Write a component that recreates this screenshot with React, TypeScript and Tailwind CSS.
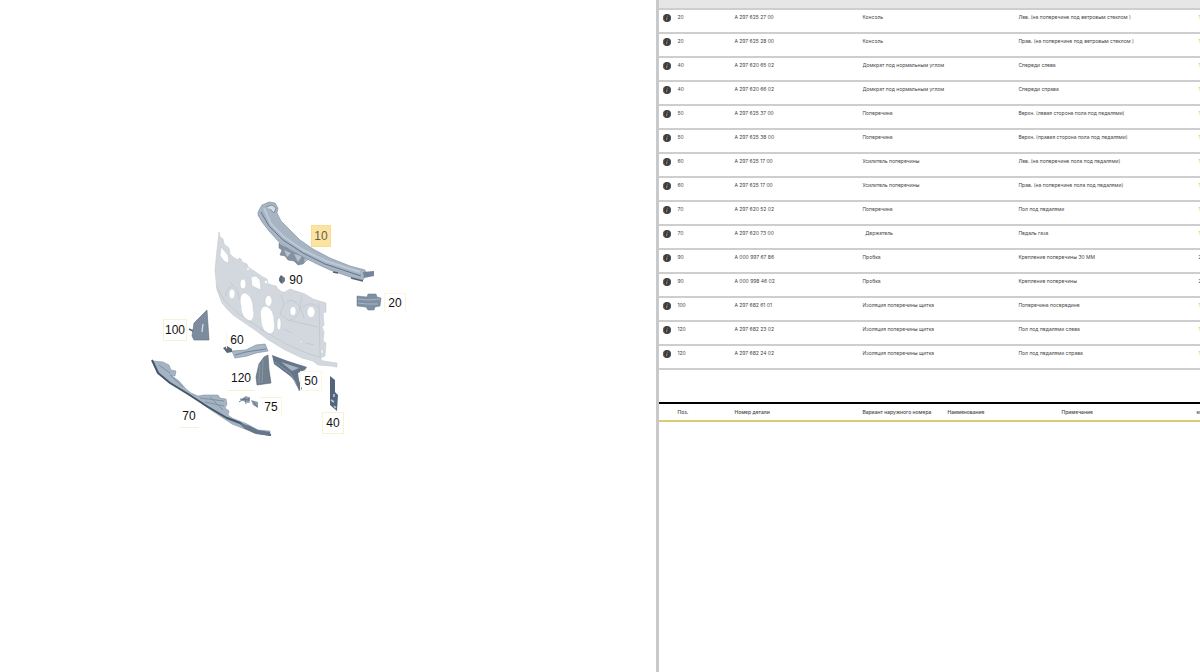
interface Part {
  pos: string;
  number: string;
  name: string;
  note: string;
  qty: number;
}

const parts: Part[] = [
  { pos: "20", number: "A 297 625 27 00", name: "Консоль", note: "Лев. (на поперечине под ветровым стеклом )", qty: 1 },
  { pos: "20", number: "A 297 625 28 00", name: "Консоль", note: "Прав. (на поперечине под ветровым стеклом )", qty: 1 },
  { pos: "40", number: "A 297 620 65 02", name: "Домкрат под нормальным углом", note: "Спереди слева", qty: 1 },
  { pos: "40", number: "A 297 620 66 02", name: "Домкрат под нормальным углом", note: "Спереди справа", qty: 1 },
  { pos: "50", number: "A 297 625 37 00", name: "Поперечина", note: "Верхн. (левая сторона пола под педалями)", qty: 1 },
  { pos: "50", number: "A 297 625 38 00", name: "Поперечина", note: "Верхн. (правая сторона пола под педалями)", qty: 1 },
  { pos: "60", number: "A 297 625 17 00", name: "Усилитель поперечины", note: "Лев. (на поперечине пола под педалями)", qty: 1 },
  { pos: "60", number: "A 297 625 17 00", name: "Усилитель поперечины", note: "Прав. (на поперечине пола под педалями)", qty: 1 },
  { pos: "70", number: "A 297 620 52 02", name: "Поперечина", note: "Пол под педалями", qty: 1 },
  { pos: "70", number: "A 297 620 73 00", name: "  Держатель", note: "Педаль газа", qty: 1 },
  { pos: "90", number: "A 000 997 67 86", name: "Пробка", note: "Крепление поперечины 30 MM", qty: 2 },
  { pos: "90", number: "A 000 998 46 02", name: "Пробка", note: "Крепление поперечины", qty: 2 },
  { pos: "100", number: "A 297 682 61 01", name: "Изоляция поперечины щитка", note: "Поперечина посередине", qty: 1 },
  { pos: "120", number: "A 297 682 23 02", name: "Изоляция поперечины щитка", note: "Пол под педалями слева", qty: 1 },
  { pos: "120", number: "A 297 682 24 02", name: "Изоляция поперечины щитка", note: "Пол под педалями справа", qty: 1 },
];

// callouts on the drawing canvas
const callouts = [
  { id: "10", box: "left-[166px] top-[30px] w-5 h-[22px] bg-[#fce3a0] border-[#f7dc94] text-[#66604f]" },
  { id: "90", box: "left-[141px] top-[76px] w-5 h-[18px] border-transparent text-[#111]" },
  { id: "20", box: "left-[239px] top-[98px] w-[22px] h-[20px] border-[#faf6e2] border-b-transparent text-[#111]" },
  { id: "100", box: "left-[18px] top-[124px] w-6 h-[22px] border-[#f8f2d4] text-[#111]" },
  { id: "60", box: "left-[81px] top-[136px] w-[22px] h-[18px] border-transparent border-l-[#faf6e2] text-[#111]" },
  { id: "120", box: "left-[82px] top-[170px] w-[28px] h-[26px] border-transparent border-b-[#f8f2d4] text-[#111]" },
  { id: "50", box: "left-[155px] top-[176px] w-[22px] h-[20px] border-[#faf6e2] text-[#111]" },
  { id: "40", box: "left-[177px] top-[217px] w-[22px] h-[22px] border-[#f8f2d4] text-[#111]" },
  { id: "75", box: "left-[115px] top-[202px] w-[22px] h-[20px] border-transparent border-t-[#f8f2d4] border-r-[#faf6e2] text-[#111]" },
  { id: "70", box: "left-[34px] top-[209px] w-[20px] h-[24px] border-transparent border-b-[#f8f2d4] text-[#111]" },
];

export default function App() {
  return (
    <div className="flex min-h-screen overflow-hidden bg-white font-['Liberation_Sans',Arial,sans-serif] text-[#444]">
      <main className="min-w-0 flex-1 pl-[145px] pt-[195px]">
        <div className="relative h-[250px] w-[270px]">
          <Drawing />
          {callouts.map((c) => (
            <button
              key={c.id}
              type="button"
              className={`absolute flex items-center justify-center border text-[12px] leading-4 ${c.box}`}
            >
              {c.id}
            </button>
          ))}
        </div>
      </main>

      <aside className="w-[45.3%] overflow-hidden border-l-3 border-[#c9c9c9] font-[Inter,sans-serif] text-[5px] leading-[6px]">
        <div className="h-2 bg-[#e6e6e6]" />
        <table className="w-[580px] table-fixed border-collapse">
          <colgroup>
            <col className="w-[18px]" />
            <col className="w-[57px]" />
            <col className="w-[128px]" />
            <col className="w-[156px]" />
            <col className="w-[180px]" />
            <col />
          </colgroup>
          <tbody>
            {parts.map((part, i) => (
              <tr key={i} className="h-6 border-y-2 border-[#cecece] align-top">
                <td className="pl-1 pt-1">
                  <button type="button" aria-label={`Info ${part.number}`} className="block">
                    <InfoIcon />
                  </button>
                </td>
                <td className="pt-1">{part.pos}</td>
                <td className="pt-1">{part.number}</td>
                <td className="whitespace-pre pt-1">{part.name}</td>
                <td className="pt-1">{part.note}</td>
                <td className={part.qty > 1 ? "pt-1" : "pt-1 text-[#d9c24a]"}>{part.qty}</td>
              </tr>
            ))}
          </tbody>
        </table>

        <table className="mt-8 w-[580px] table-fixed border-collapse">
          <colgroup>
            <col className="w-[75px]" />
            <col className="w-[128px]" />
            <col className="w-[85px]" />
            <col className="w-[114px]" />
            <col className="w-[135px]" />
            <col />
          </colgroup>
          <thead>
            <tr className="h-[18px] whitespace-nowrap border-b-2 border-t-2 border-b-[#dccb72] border-t-black text-left">
              <th className="pl-[18px] font-medium">Поз.</th>
              <th className="font-medium">Номер детали</th>
              <th className="font-medium">Вариант наружного номера</th>
              <th className="font-medium">Наименование</th>
              <th className="font-medium">Примечание</th>
              <th className="font-medium">кол-во</th>
            </tr>
          </thead>
        </table>
      </aside>
    </div>
  );
}

function InfoIcon() {
  return (
    <svg viewBox="0 0 8 8" className="size-2">
      <circle cx="4" cy="4" r="4" fill="#3d3b3a" />
      <path d="M1.6 1.4A3.6 3.6 0 0 0 1.6 6.6" stroke="#8a5a35" strokeWidth="0.9" fill="none" />
      <path d="M6.4 1.4A3.6 3.6 0 0 1 6.4 6.6" stroke="#3f5f7d" strokeWidth="0.9" fill="none" />
      <path d="M4.5 1.7L4.3 2.6M4.1 3.4L3.6 6.2" stroke="#9a938b" strokeWidth="1" fill="none" />
    </svg>
  );
}

function Drawing() {
  return (
    <svg viewBox="145 195 270 250" className="block h-full w-full" strokeLinejoin="round">
      {/* bulkhead */}
      <path
        fill="#d2d8de"
        fillRule="evenodd"
        stroke="#c3cbd2"
        strokeWidth="0.6"
        d="M219 232L220 237L223 239L224 244L229 248L230 254L233 257L238 260L239 258L241 259L242 262L247 264L248 267L263 277L267 279L268 284L276 286L278 289L282 292L285 292L290 289L305 294L313 299L326 303L326 312L323 313L324 325L322 327L324 332L323 341L326 343L325 356L320 358L323 361L337 363L337 367L331 366L318 365L313 361L302 358L285 350L267 339L255 330L233 315L227 309L222 303L217 290L215 270L217 250Z
        M221 247L228 255L229 263L225 262L220 256Z
        M251 277L256 276L260 280L261 290L252 286Z
        M229 294A3 5 0 1 0 235 294A3 5 0 1 0 229 294Z
        M240 284A3 5 0 1 0 246 284A3 5 0 1 0 240 284Z
        M241 306A6 11 -15 1 0 253 308A6 11 -15 1 0 241 306Z
        M265 301A3.5 5.5 0 1 0 272 301A3.5 5.5 0 1 0 265 301Z
        M261 319A6.5 11 -15 1 0 274 321A6.5 11 -15 1 0 261 319Z
        M277 323A2 6 0 1 0 281 325A2 6 0 1 0 277 323Z
        M290 311A3 4.5 0 1 0 296 311A3 4.5 0 1 0 290 311Z
        M307 312A4 5.5 0 1 0 315 312A4 5.5 0 1 0 307 312Z
        M300 341L302 340L302 343L300 343Z
        M321 350L323 349L323 354L321 353Z"
      />
      <g fill="none" stroke="#bbc4cc" strokeWidth="0.7">
        <path d="M216 285L224 300L239 314L261 329L286 344L304 352L321 358" />
        <path d="M281 295L284 304L280 314L288 320L318 327M302 295L300 306L304 318M286 303Q292 296 300 307Q299 318 290 320" />
        <path d="M230 282L238 291L239 300M319 303L320 357M306 343L314 345M284 329L292 333" />
        <path d="M226 297Q225 289 232 286M302 308Q309 300 318 307" />
      </g>
      <circle cx="248" cy="269" r="1" fill="#fff" />
      <circle cx="266" cy="282" r="1.2" fill="#fff" />

      {/* 10: upper cross member */}
      <path
        fill="#8391a1"
        stroke="#647284"
        strokeWidth="0.5"
        d="M279 243L283 246L290 249L300 252L315 258L307 260L303 264L298 265L294 261L288 260L285 256L280 255L282 250L279 248Z"
      />
      <path d="M284 250L291 253L287 257ZM294 254L302 256L298 262ZM305 257L309 259L304 262Z" fill="#b7c2cd" />
      <path
        fill="#a6b4c3"
        stroke="#7c8b9c"
        strokeWidth="0.6"
        d="M258 212L262 205L269 202L275 203L278 208L277 213L281 221L290 230L300 240L313 249L330 258L350 266L365 270L366 274L363 280L350 277L330 270L317 264L303 257L290 250L279 242L269 231L262 222L258 215Z"
      />
      <path d="M264 208L271 224L284 237L303 250L326 261L360 272" fill="none" stroke="#bdc9d4" strokeWidth="2" />
      <path d="M261 212L269 226L283 240L303 253L325 264L361 276" fill="none" stroke="#66768a" strokeWidth="1" />
      <path d="M266 207L272 205L276 208L274 213L270 209" fill="#d5dce3" stroke="#68788a" strokeWidth="0.7" />
      <path d="M363 272L374 271V276L364 278Z" fill="#73869a" />
      <path d="M333 272L338 273M351 278L363 281" stroke="#4f6074" strokeWidth="1.5" />

      {/* 90: plug */}
      <path d="M281 275L285 278V281L282 284L279 281V278Z" fill="#6c7885" />
      <path d="M281 276V283" stroke="#46515d" strokeWidth="0.8" />

      {/* 20: console */}
      <path d="M357 296L367 297L368 294L376 294L377 297L381 298L380 306L375 307L374 310L368 310L366 307L357 306Z" fill="#7f90a2" stroke="#627487" strokeWidth="0.5" />
      <path d="M358 299L367 300L380 299M358 303L367 304L378 304" stroke="#a8b6c4" strokeWidth="1" fill="none" />

      {/* 100 */}
      <path d="M207 310L209 340L194 340L192 336L194 323Z" fill="#7c8c9e" stroke="#5f6e7f" strokeWidth="0.6" />
      <path d="M203 324L202 332" stroke="#d7dee5" strokeWidth="1.2" />
      <path d="M189 329L193 331" stroke="#59636e" strokeWidth="1.5" />

      {/* 60: reinforcement */}
      <path d="M232 351L246 350L256 345L265 344L268 351L256 353L247 356L235 358Z" fill="#a9b8c7" stroke="#76879a" strokeWidth="0.6" />
      <path d="M235 355L246 352L266 349" fill="none" stroke="#718398" strokeWidth="1" />
      <path d="M223 348L227 346L232 349L232 352L227 353Z" fill="#5b6774" />

      {/* 120 */}
      <path d="M268 355L269 370L271 383L257 385L256 377L259 364L264 357Z" fill="#71808f" stroke="#57636f" strokeWidth="0.6" />
      <path d="M260 364L259 383M263 360L262 383" stroke="#94a1ae" strokeWidth="0.7" />

      {/* 50 */}
      <path d="M272 355L288 361L307 367L305 370L298 373L299 380L302 389L299 391L295 381L290 376L274 364Z" fill="#66768a" />
      <path d="M281 362L292 371L299 368Z" fill="#a6b3c1" />
      <path d="M275 362L291 374L297 386" stroke="#8494a5" strokeWidth="1" fill="none" />

      {/* 40 */}
      <path d="M330 376L335 380L335 392L338 395L337 411L330 405Z" fill="#53657a" />
      <path d="M331 400L334 402M334 394L334 397M334 406L336 408" stroke="#bac7d3" strokeWidth="1.6" />

      {/* 75: holder */}
      <path d="M240 400L246 396L250 398L248 403L243 401ZM251 400L258 402L258 408L253 405Z" fill="#8d9baa" />
      <path d="M239 402L245 398L246 404M249 397V403M253 401L257 407M240 399L250 400" stroke="#657486" strokeWidth="0.9" fill="none" />

      {/* 70: lower cross member */}
      <path
        fill="#a5b4c3"
        stroke="#7b8b9c"
        strokeWidth="0.5"
        d="M153 361L163 362L169 365L171 370L176 371L175 376L171 375L179 381L186 389L191 393L198 396L204 395L218 395L220 398L226 399L227 404L225 408L229 411L228 415L232 418L247 424L258 430L270 431V435L255 433L232 424L211 410L190 395L165 379L158 372Z"
      />
      <path d="M159 365L170 373M200 398L224 401M205 402L224 406M170 375L183 387M210 397L223 410" stroke="#8091a3" strokeWidth="1" fill="none" />
      <path d="M152 360L158 373L170 383L188 394L208 407L227 418L240 423L254 432L271 435" fill="none" stroke="#44566b" strokeWidth="2" />
      <path d="M239 423L250 426L258 430L270 432L270 436L256 434L245 429Z" fill="#65778b" />
    </svg>
  );
}
